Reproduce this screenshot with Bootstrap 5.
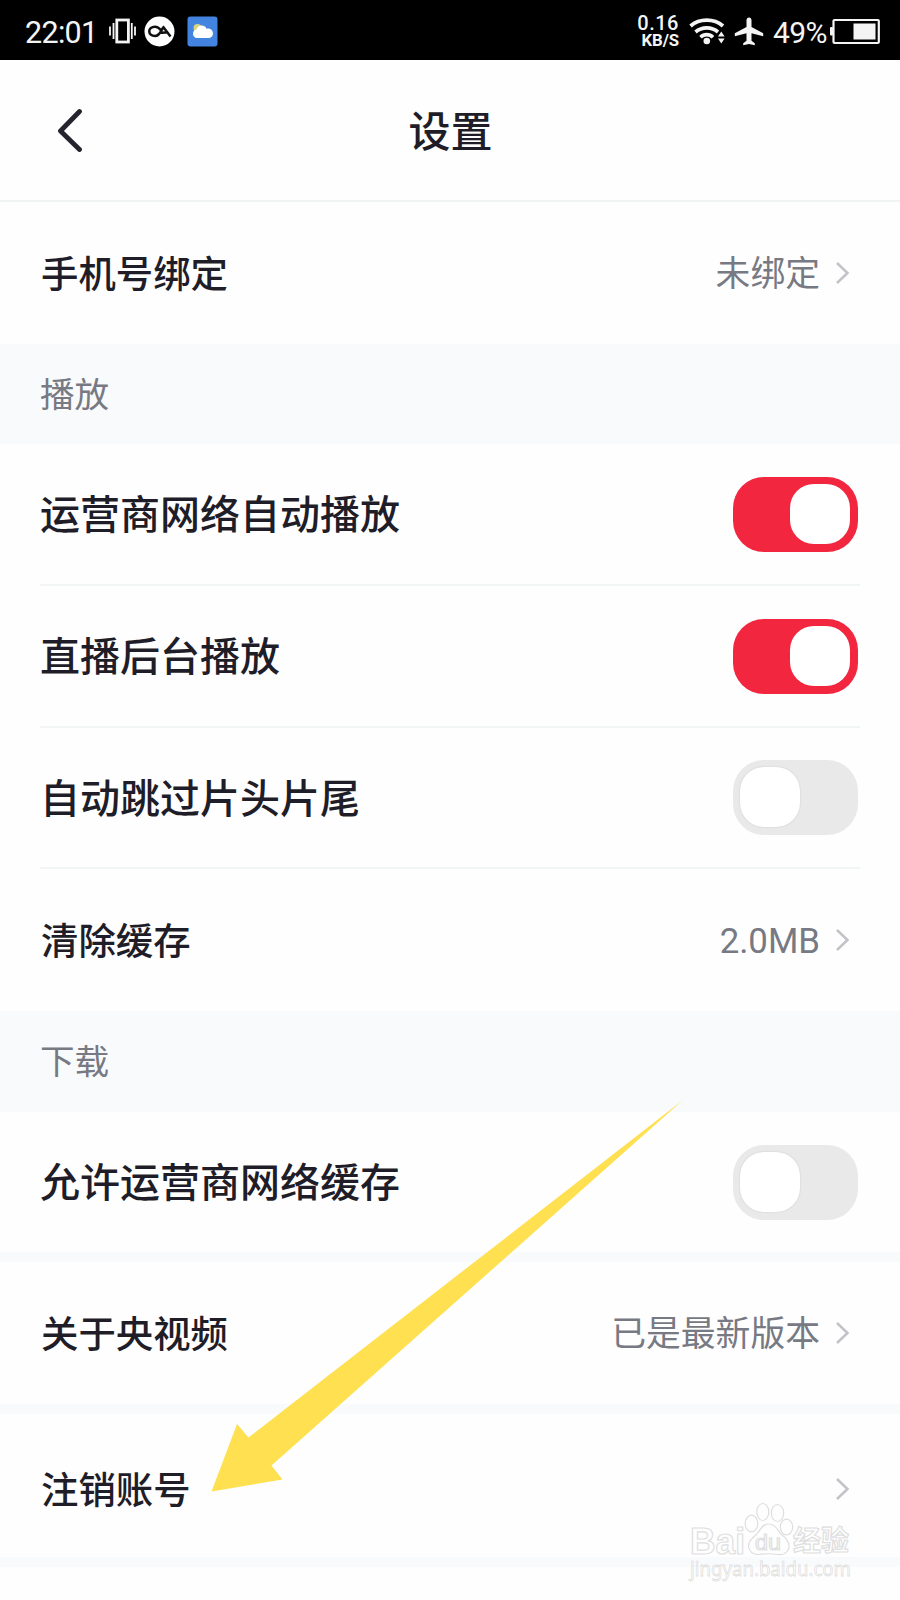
<!DOCTYPE html>
<html lang="zh-CN">
<head>
<meta charset="utf-8">
<meta name="viewport" content="width=device-width, initial-scale=1">
<title>设置</title>
<link href="https://cdn.jsdelivr.net/npm/bootstrap@5.3.0/dist/css/bootstrap.min.css" rel="stylesheet">
<style>
  body { font-family: Roboto, "Noto Sans CJK SC", sans-serif; color: #1e1d28; background: #fefefe; }
  .screen { width: 900px; height: 1600px; overflow: hidden; }
  .statusbar { height: 60px; background: #000; color: #f4f4f4; padding: 2px 20px 0 25px; line-height: 1; }
  .clock { font-size: 30.5px; width: 76px; padding-top: 4px; letter-spacing: -.7px; }
  .netspeed { width: 50px; font-weight: 700; text-align: right; padding-right: 8px; }
  .netspeed .num { font-size: 20px; letter-spacing: .5px; line-height: 18px; font-weight: 500; }
  .netspeed .unit { font-size: 16.8px; line-height: 17px; letter-spacing: -.1px; }
  .percent { font-size: 30px; letter-spacing: -.6px; width: 57px; padding-top: 4px; margin-left: -1px; }
  .titlebar { height: 142px; border-bottom: 2px solid #f1f4f4; padding-left: 57px; padding-right: 56px; }
  .titlebar h1 { font-size: 42px; line-height: 56px; font-weight: 500; margin: 0; padding-top: 5px; }
  .setting { height: 142px; padding: 0 50px 0 40px; }
  .setting .name { font-size: 37.4px; font-weight: 500; line-height: 56px; padding: 3px 0 0 1px; }
  .setting .value { font-size: 34.8px; color: #777983; line-height: 52px; padding-top: 1px; }
  .value-group { gap: 14px; }
  .with-switch { height: 140px; padding: 0 2.5px 0 0; margin: 0 40px; }
  .with-switch .name { font-size: 40px; padding: 4px 0 0; }
  .ruled { border-bottom: 2px solid #f2f5f5; height: 142px; }
  .ruled.compact { height: 141px; }
  .last-row { height: 143px; padding-top: 7px; }
  .section-label { height: 100px; background: #f9fafc; color: #777983; font-size: 34.6px; padding: 3px 40px 0; }
  .section-label.tall { height: 101px; }
  .divider-band { height: 10px; background: #f9fafc; }
  .toggle { width: 125px; height: 75px; border-radius: 31px; background: #e9e9e9; padding: 7px 7.5px; }
  .toggle .knob { width: 60px; height: 60px; border-radius: 24px; background: #fff; box-shadow: 0 0 2px rgba(0,0,0,.14); }
  .toggle.on { background: #f2273f; justify-content: flex-end; }
  .toggle.on .knob { box-shadow: none; }
  .overlay { left: 0; top: 0; pointer-events: none; }
</style>
</head>
<body>
<main class="screen position-relative">
  <div class="statusbar d-flex align-items-center justify-content-between">
    <div class="d-flex align-items-center">
      <div class="clock">22:01</div>
      <svg class="ms-2" width="27" height="26" viewBox="0 0 27 26" fill="none" stroke="#f4f4f4">
        <rect x="7.8" y="2" width="11.6" height="22" stroke-width="2.8"/>
        <path d="M4.5 5v16M22.8 5v16" stroke-width="1.800"/><path d="M1 8.5v9M26 8.5v9" stroke-width="1.800"/>
      </svg>
      <svg style="margin-left:8px" width="31" height="31" viewBox="0 0 31 31">
        <circle cx="15.5" cy="15.5" r="15" fill="#fff"/>
        <path d="M26.5 20.5 19.5 11.2c-1.8 1.5-3.2 8.8-8.4 8.8-7.8 0-7.8-9.3 0-9.3 3 0 4.4 1.7 5.9 3.5M16.5 16.8c3 .2 5.500-.2 7.500-1.200" fill="none" stroke="#111" stroke-width="2.500"/>
      </svg>
      <svg style="margin-left:12px" width="31" height="31" viewBox="0 0 31 31">
        <rect x=".5" y=".5" width="30" height="30" rx="3" fill="#4384e0"/>
        <circle cx="10.500" cy="12" r="4" fill="#d9d47c"/>
        <path d="M10 22a4.300 4.300 0 0 1-.5-8.500c1-5 8.500-5.600 10-.8 3-.8 6.500 1.300 6.500 4.800 0 2.500-2 4.500-4.500 4.500z" fill="#fff"/>
      </svg>
    </div>
    <div class="d-flex align-items-center">
      <div class="netspeed"><div class="num">0.16</div><div class="unit">KB/S</div></div>
      <svg style="margin-left:2px" width="36" height="28" viewBox="0 0 36 28" fill="none" stroke="#f4f4f4" stroke-width="3.700">
        <path d="M1.500 9c9-7.800 23.500-7.800 32.500 0M6.500 15c6.500-5.500 16-5.500 22.500 0M11.500 20.300c3.500-3.500 9-3.500 12.500 0"/>
        <circle cx="17.800" cy="24" r="3.300" fill="#f4f4f4" stroke="none"/>
        <path d="M29 19.500l3.300-5 3.300 5zM29 21.500l3.300 5 3.300-5z" fill="#f4f4f4" stroke="none"/>
      </svg>
      <svg style="margin:0 10px 0 9px" width="30" height="29" viewBox="0 0 30 29" fill="#f4f4f4">
        <path d="M15 .5c-1.500 0-2.500 1.200-2.500 2.800V10L.8 16.300v2.900l11.700-3v7.500l-3.300 2.600v2L15 27l5.800 1.300v-2l-3.300-2.600v-7.500l11.700 3v-2.900L17.500 10V3.300C17.500 1.700 16.500.5 15 .5z"/>
      </svg>
      <div class="percent">49%</div>
      <svg width="50" height="27" viewBox="0 0 50 27">
        <rect x="3.500" y="2" width="45.300" height="23" rx="1" fill="none" stroke="#f4f4f4" stroke-width="2.200"/>
        <rect x="0" y="9" width="3" height="8.500" rx="1" fill="#f4f4f4"/>
        <rect x="23.500" y="5.500" width="22" height="16" fill="#f4f4f4"/>
      </svg>
    </div>
  </div>

  <header class="titlebar d-flex align-items-center justify-content-between">
    <svg width="26" height="44" viewBox="0 0 26 44" fill="none" stroke="#24232e" stroke-width="4.800" stroke-linecap="round" stroke-linejoin="round"><path d="M22.500 3.500 3.500 23l19 18.500"/></svg>
    <h1>设置</h1>
    <span style="width:26px"></span>
  </header>

  <section>
    <div class="setting d-flex align-items-center justify-content-between">
      <div class="name">手机号绑定</div>
      <div class="value-group d-flex align-items-center"><span class="value">未绑定</span>
        <svg width="16" height="24" viewBox="0 0 16 24" fill="none" stroke="#c2c3c6" stroke-width="2.500"><path d="M3 2l10.500 10L3 22"/></svg></div>
    </div>
    <div class="section-label d-flex align-items-center">播放</div>
    <div class="setting with-switch ruled d-flex align-items-center justify-content-between">
      <div class="name">运营商网络自动播放</div><div class="toggle on d-flex"><div class="knob"></div></div>
    </div>
    <div class="setting with-switch ruled d-flex align-items-center justify-content-between">
      <div class="name">直播后台播放</div><div class="toggle on d-flex"><div class="knob"></div></div>
    </div>
    <div class="setting with-switch ruled compact d-flex align-items-center justify-content-between">
      <div class="name">自动跳过片头片尾</div><div class="toggle d-flex"><div class="knob"></div></div>
    </div>
    <div class="setting d-flex align-items-center justify-content-between">
      <div class="name">清除缓存</div>
      <div class="value-group d-flex align-items-center"><span class="value">2.0MB</span>
        <svg width="16" height="24" viewBox="0 0 16 24" fill="none" stroke="#c2c3c6" stroke-width="2.500"><path d="M3 2l10.500 10L3 22"/></svg></div>
    </div>
    <div class="section-label tall d-flex align-items-center">下载</div>
    <div class="setting with-switch d-flex align-items-center justify-content-between">
      <div class="name">允许运营商网络缓存</div><div class="toggle d-flex"><div class="knob"></div></div>
    </div>
    <div class="divider-band"></div>
    <div class="setting d-flex align-items-center justify-content-between">
      <div class="name">关于央视频</div>
      <div class="value-group d-flex align-items-center"><span class="value">已是最新版本</span>
        <svg width="16" height="24" viewBox="0 0 16 24" fill="none" stroke="#c2c3c6" stroke-width="2.500"><path d="M3 2l10.500 10L3 22"/></svg></div>
    </div>
    <div class="divider-band"></div>
    <div class="setting last-row d-flex align-items-center justify-content-between">
      <div class="name">注销账号</div>
      <svg width="16" height="24" viewBox="0 0 16 24" fill="none" stroke="#c2c3c6" stroke-width="2.500"><path d="M3 2l10.500 10L3 22"/></svg>
    </div>
    <div class="divider-band"></div>
  </section>

  <!-- pointer arrow and watermark drawn over the list -->
  <svg class="overlay position-absolute" width="900" height="1600" viewBox="0 0 900 1600">
    <path d="M683 1100 248.500 1437.500 237 1424 211.500 1491.500 282.500 1479.500 271.500 1465.500z" fill="#ffe050"/>
    <g fill="#fefefe" stroke="#dedede" stroke-width="1.200">
      <text x="690" y="1553.500" font-size="36" font-weight="700" font-family="Liberation Sans, sans-serif" textLength="55" lengthAdjust="spacingAndGlyphs">Bai</text>
      <ellipse cx="751.500" cy="1523.500" rx="6.300" ry="8.300"/>
      <ellipse cx="762.800" cy="1512" rx="6" ry="8.500"/>
      <ellipse cx="777.500" cy="1513" rx="6.200" ry="8.500"/>
      <ellipse cx="786.500" cy="1527" rx="6.200" ry="7.800"/>
      <path d="M768 1524c7 0 9 5 13 10 5 4 9 8 8 13-1 6-6 8-11 7.500-7-1-13-1-19 0-6 .5-10-3-10.500-8-.3-5 4-9 8-12 4-5 6-10.500 11.500-10.500z"/>
      <text x="755" y="1550" font-size="22" font-family="Liberation Sans, sans-serif" textLength="26" lengthAdjust="spacingAndGlyphs">du</text>
      <text x="793" y="1551" font-size="28" font-weight="700" font-family="Noto Sans CJK SC, sans-serif">经验</text>
      <text x="690" y="1576" font-size="20.500" stroke-width=".8" font-family="Noto Sans, sans-serif" textLength="161" lengthAdjust="spacingAndGlyphs">jingyan.baidu.com</text>
    </g>
  </svg>
</main>
<script src="https://cdn.jsdelivr.net/npm/bootstrap@5.3.0/dist/js/bootstrap.bundle.min.js"></script>
</body>
</html>
